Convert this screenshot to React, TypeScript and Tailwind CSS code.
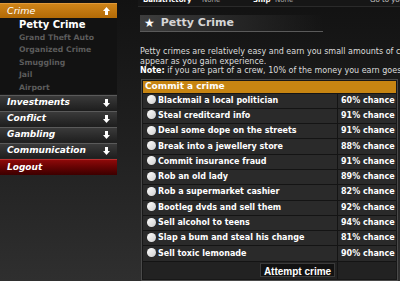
import React from "react"

const crimes: [string, number][] = [
  ["Blackmail a local politician", 60],
  ["Steal creditcard info", 91],
  ["Deal some dope on the streets", 91],
  ["Break into a jewellery store", 88],
  ["Commit insurance fraud", 91],
  ["Rob an old lady", 89],
  ["Rob a supermarket cashier", 82],
  ["Bootleg dvds and sell them", 92],
  ["Sell alcohol to teens", 94],
  ["Slap a bum and steal his change", 81],
  ["Sell toxic lemonade", 90],
]

const subItems = ["Grand Theft Auto", "Organized Crime", "Smuggling", "Jail", "Airport"]

function Arrow({ up = false }: { up?: boolean }) {
  return (
    <svg width="7" height="8" viewBox="0 0 7 8" className={up ? "" : "rotate-180"}>
      <path d="M3.5 0 L7 4 L5 4 L5 8 L2 8 L2 4 L0 4 Z" fill="#fff" />
    </svg>
  )
}

function MenuHeader({ label }: { label: string }) {
  return (
    <div className="h-[15px] mb-px flex items-center justify-between pl-[7px] pr-[7px] border-t border-[#5a5a5a] bg-gradient-to-b from-[#3a3a3a] to-[#1f1f1f]">
      <span className="italic font-bold text-[9px] text-white">{label}</span>
      <Arrow />
    </div>
  )
}

export default function App() {
  return (
    <div className="w-[400px] h-[281px] overflow-hidden flex bg-gradient-to-b from-[#121212] to-[#2f2f2f] font-['DejaVu_Sans',sans-serif] text-white">
      <aside className="w-[138px] shrink-0 pt-[3px]">
        <div className="w-[117px]">
          <div className="h-[15px] flex items-center justify-between px-[7px] border-t border-[#e09a3a] bg-gradient-to-b from-[#cf8418] to-[#b26a06]">
            <span className="italic text-[9.5px] text-white">Crime</span>
            <Arrow up />
          </div>
          <ul className="bg-[#121212] pt-px">
            <li className="h-[12.5px] leading-[12.5px] pl-[19px] font-bold text-[10px] text-white">Petty Crime</li>
            {subItems.map((s) => (
              <li key={s} className="h-[12.5px] leading-[12.5px] pl-[19px] font-bold text-[7.7px] text-[#5c5c5c]">{s}</li>
            ))}
          </ul>
          <div className="pt-px">
            <MenuHeader label="Investments" />
            <MenuHeader label="Conflict" />
            <MenuHeader label="Gambling" />
            <MenuHeader label="Communication" />
            <div className="h-[16px] flex items-center pl-[7px] border-t border-[#b83030] bg-gradient-to-b from-[#8e0a0a] to-[#3c0000]">
              <span className="italic font-bold text-[9px] text-white">Logout</span>
            </div>
          </div>
        </div>
      </aside>

      <main className="flex-1 min-w-0">
        <div className="h-[7px] overflow-hidden bg-[#161616] border-b border-[#2a2a2a]">
          <div className="-mt-[5px] flex text-[7px] whitespace-nowrap pl-[5px]">
            <span className="font-bold w-[59px] shrink-0">Bailstrictory</span>
            <span className="text-[#aaa] w-[51px] shrink-0">None</span>
            <span className="font-bold w-[22px] shrink-0">Ship</span>
            <span className="text-[#aaa] w-[95px] shrink-0">None</span>
            <span className="text-[#ccc]">Go to your</span>
          </div>
        </div>

        <div className="mt-[8px] ml-[2px] w-[183px] h-[17px] flex items-center gap-[6px] pl-[4px] bg-gradient-to-r from-[#3e3e3e] via-[#262626] to-transparent border-b border-[#5a5a5a]">
          <span className="text-[12px] leading-none text-white">★</span>
          <span className="font-bold text-[11px] text-[#d6d6d6]">Petty Crime</span>
        </div>

        <div className="mt-[15px] ml-[2px] text-[8px] leading-[9.5px] text-[#dcdcdc] whitespace-nowrap">
          <p>Petty crimes are relatively easy and earn you small amounts of cash. More crimes</p>
          <p>appear as you gain experience.</p>
          <p><b className="text-white">Note:</b> if you are part of a crew, 10% of the money you earn goes to the crew.</p>
        </div>

        <div className="mt-[3px] ml-[3px] w-[257px] border border-[#4a4a4a] p-px bg-[#181818]">
          <div className="h-[12px] flex items-center pl-[2px] bg-[#c78512] font-bold text-[9px] text-white">Commit a crime</div>
          {crimes.map(([name, pct]) => (
            <div key={name} className="h-[15.3px] flex border-t border-[#141414] bg-[#2a2a2a]">
              <div className="w-[195px] flex items-center gap-[2px] pl-[4px] border-r border-[#141414]">
                <span className="w-[9px] h-[9px] rounded-full bg-gradient-to-br from-white to-[#cfcfcf] -mt-[2px]"></span>
                <span className="font-bold text-[8px] text-white">{name}</span>
              </div>
              <div className="flex-1 flex items-center pl-[3px] font-bold text-[8px] text-white">{pct}% chance</div>
            </div>
          ))}
          <div className="h-[18px] flex border-t border-[#141414] bg-[#222]">
            <div className="w-[195px] flex items-center justify-end pr-[2px] border-r border-[#141414]">
              <button className="h-[14px] w-[75px] bg-[#121212] border border-[#3a3a3a] font-['Liberation_Sans',sans-serif] font-bold text-[10px] text-white">Attempt crime</button>
            </div>
            <div className="flex-1"></div>
          </div>
        </div>
      </main>
    </div>
  )
}
